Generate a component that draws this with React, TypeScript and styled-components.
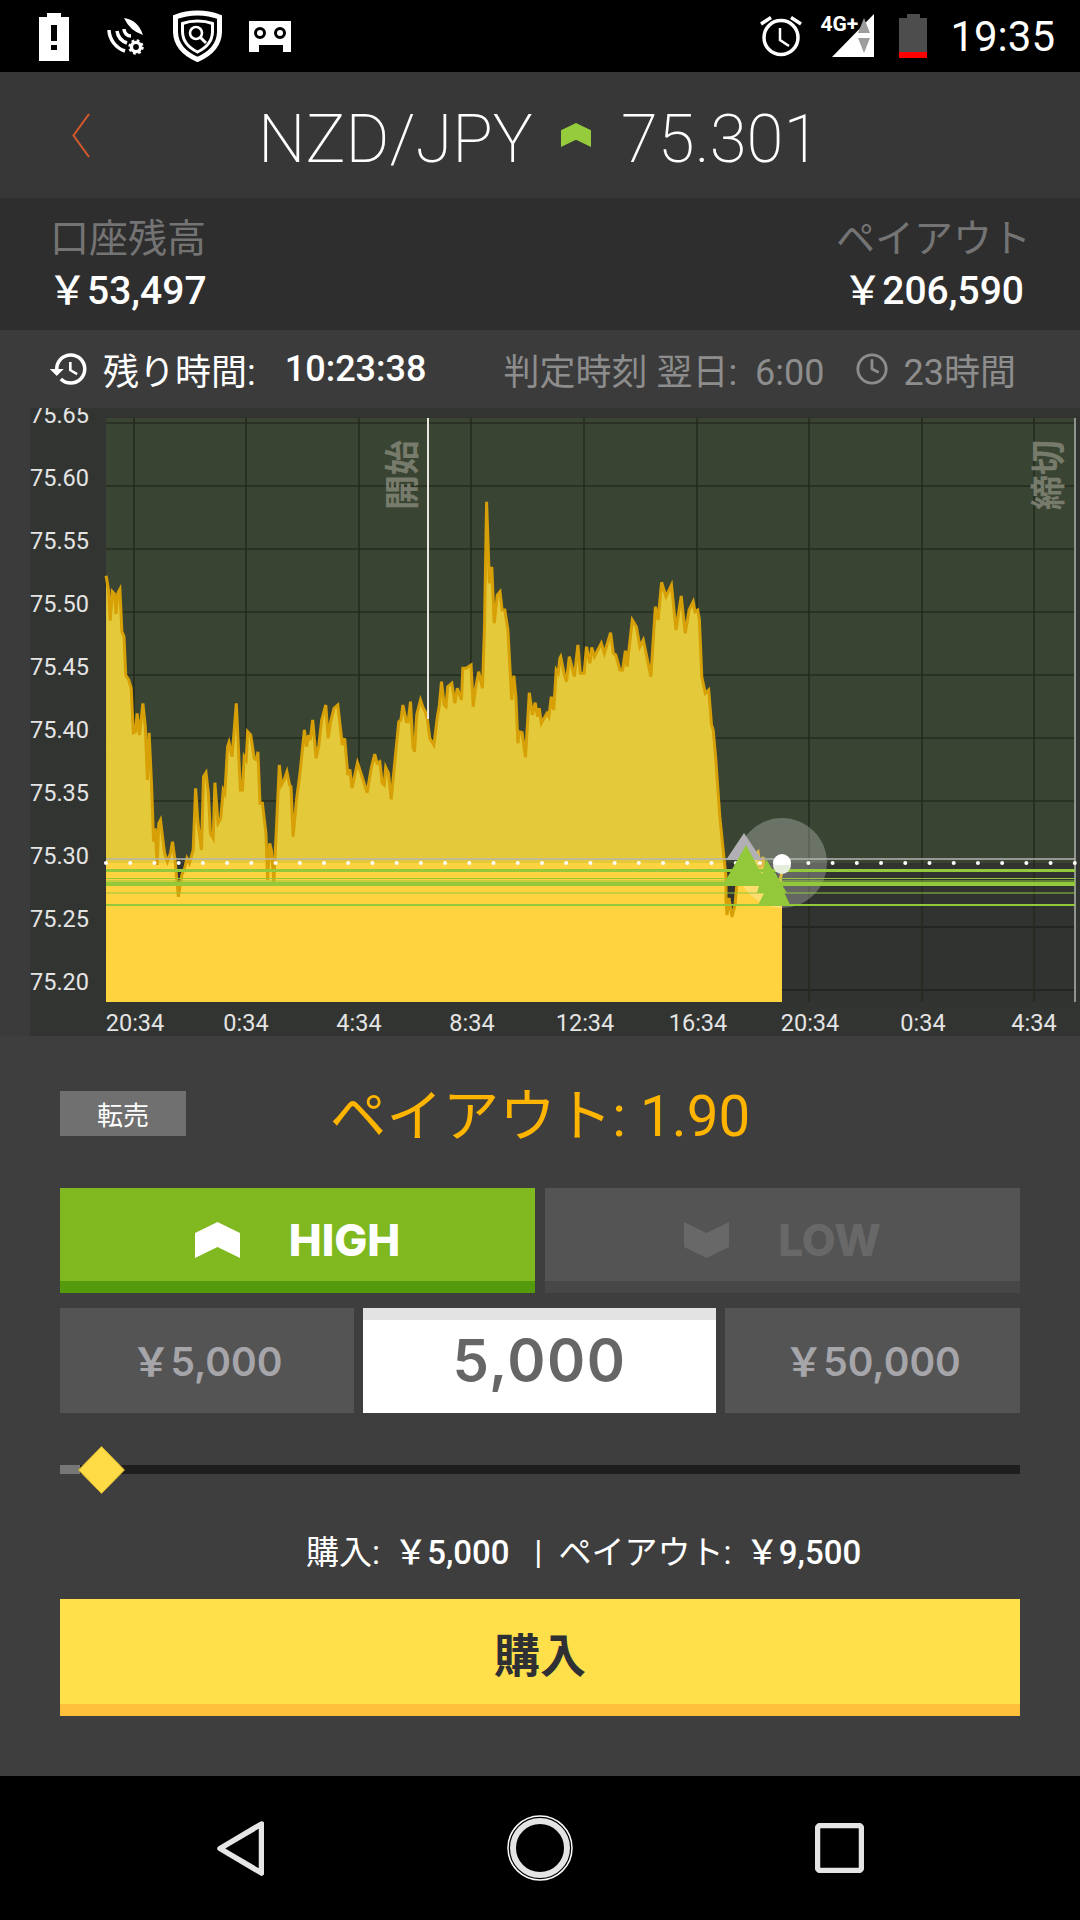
import styled, { createGlobalStyle } from "styled-components";
import { MdHistory } from "react-icons/md";
import { Clock } from "lucide-react";

const JP = `"Roboto", "Noto Sans CJK JP", sans-serif`;
const ROUND = `"Inter", "Noto Sans CJK JP", sans-serif`;

const GlobalStyle = createGlobalStyle`
  html, body {
    margin: 0;
    padding: 0;
    background: #000;
  }
  * {
    box-sizing: border-box;
  }
`;

const Screen = styled.div`
  width: 1080px;
  height: 1920px;
  display: flex;
  flex-direction: column;
  overflow: hidden;
  font-family: ${JP};
  background: #3e3e3e;
`;

/* status bar */
const StatusBar = styled.div`
  height: 72px;
  flex: none;
  background: #000;
  display: flex;
  align-items: flex-start;
  padding: 0 25px 0 39px;
`;
const StatusIcon = styled.svg<{ $left?: number; $top: number }>`
  display: block;
  flex: none;
  margin-left: ${({ $left }) => $left || 0}px;
  margin-top: ${({ $top }) => $top}px;
`;
const StatusSpacer = styled.div`
  flex: 1;
`;
const SignalWrap = styled.div`
  position: relative;
  width: 54px;
  height: 44px;
  margin: 14px 0 0 18px;
  flex: none;
`;
const NetworkType = styled.span`
  position: absolute;
  left: 0;
  top: -2px;
  font-size: 21px;
  line-height: 24px;
  font-weight: 700;
  color: #fff;
`;
const StatusTime = styled.div`
  margin: 17px 0 0 23px;
  font-size: 42px;
  line-height: 40px;
  color: #fff;
`;

/* header */
const Header = styled.header`
  height: 126px;
  flex: none;
  background: #373737;
  display: flex;
  align-items: center;
  padding-left: 72px;
`;
const PairName = styled.div`
  margin-left: 168px;
  padding-top: 8px;
  font-size: 67px;
  line-height: 76px;
  font-weight: 200;
  color: #fff;
`;
const Rate = styled.div`
  margin-left: 30px;
  padding-top: 8px;
  font-size: 67px;
  line-height: 76px;
  font-weight: 200;
  color: #fff;
`;
const HeaderArrow = styled.div`
  margin-left: 28px;
`;

/* balance */
const BalanceRow = styled.section`
  height: 132px;
  flex: none;
  background: #2e2e2e;
  display: flex;
  justify-content: space-between;
  padding: 16px 49px 0 50px;
`;
const BalanceCol = styled.div<{ $right?: boolean }>`
  display: flex;
  flex-direction: column;
  align-items: ${({ $right }) => ($right ? "flex-end" : "flex-start")};
`;
const BalanceLabel = styled.div`
  font-size: 39px;
  line-height: 51px;
  font-weight: 400;
  color: #747474;
`;
const BalanceValue = styled.div<{ $right?: boolean }>`
  font-size: 39px;
  line-height: 52px;
  font-weight: 500;
  color: #fff;
  margin-left: ${({ $right }) => ($right ? 0 : -2)}px;
  margin-right: ${({ $right }) => ($right ? 7 : 0)}px;
`;

/* time row */
const TimeRow = styled.section`
  height: 78px;
  flex: none;
  background: #3b3b3b;
  display: flex;
  align-items: center;
  padding-left: 48px;
  white-space: pre;
`;
const TimeLabel = styled.span`
  margin-left: 13px;
  font-size: 36px;
  color: #fff;
`;
const TimeValue = styled.span`
  margin-left: 29px;
  font-size: 36px;
  font-weight: 500;
  color: #fff;
`;
const Judge = styled.span<{ $left: number }>`
  margin-left: ${({ $left }) => $left}px;
  font-size: 36px;
  font-weight: 400;
  color: #8d8d8d;
`;
const JudgeClock = styled(Clock)`
  flex: none;
  margin: 0 14px 0 31px;
  color: #8d8d8d;
`;

/* chart */
const ChartArea = styled.section`
  height: 628px;
  flex: none;
  background: #3b3b3b;
  padding-left: 30px;
`;
const ChartSvg = styled.svg`
  display: block;
`;
const AxisText = styled.text`
  font-family: "Roboto", sans-serif;
  font-size: 23.5px;
  fill: #e4e4e4;
`;
const MarkerText = styled.text`
  font-family: "Noto Sans CJK JP", sans-serif;
  font-size: 35px;
  font-weight: 700;
  fill: #777b6b;
`;

/* trading panel */
const Panel = styled.section`
  flex: 1;
  background: #3e3e3e;
  padding: 55px 60px 0;
  display: flex;
  flex-direction: column;
`;
const PayoutRow = styled.div`
  height: 45px;
  display: grid;
  grid-template-columns: 126px 1fr 126px;
  grid-template-rows: 45px;
`;
const ResellButton = styled.div`
  height: 45px;
  background: #707070;
  color: #fff;
  font-size: 26px;
  display: flex;
  align-items: center;
  justify-content: center;
`;
const PayoutRate = styled.div`
  text-align: center;
  font-size: 56.5px;
  line-height: 52px;
  color: #ffb400;
`;
const Directions = styled.div`
  margin-top: 52px;
  display: grid;
  grid-template-columns: 1fr 1fr;
  gap: 10px;
`;
const DirectionButton = styled.div<{ $active?: boolean }>`
  height: 105px;
  padding-top: 10px;
  background: ${({ $active }) => ($active ? "#80b820" : "#545454")};
  border-bottom: 12px solid ${({ $active }) => ($active ? "#549a0c" : "#474747")};
  color: ${({ $active }) => ($active ? "#fff" : "#686868")};
  display: flex;
  align-items: center;
  justify-content: center;
  gap: 49px;
  font-family: ${ROUND};
  font-size: 44px;
  font-weight: 800;
`;
const Amounts = styled.div`
  margin-top: 15px;
  display: grid;
  grid-template-columns: 294px 353px 295px;
  gap: 9px;
`;
const AmountCell = styled.div`
  height: 105px;
  padding-bottom: 4px;
  background: #545454;
  color: #a5a5aa;
  font-family: ${ROUND};
  font-size: 39px;
  font-weight: 600;
  display: flex;
  align-items: center;
  justify-content: center;
`;
const AmountInput = styled.div`
  height: 105px;
  padding-bottom: 13px;
  background: #fff;
  border-top: 12px solid #e3e3e3;
  color: #666;
  font-family: ${ROUND};
  font-size: 58px;
  font-weight: 600;
  letter-spacing: 1.5px;
  display: flex;
  align-items: center;
  justify-content: center;
`;
const SliderBox = styled.div`
  position: relative;
  height: 48px;
  margin-top: 33px;
  display: flex;
  align-items: center;
`;
const SliderTrack = styled.div`
  width: 100%;
  height: 9px;
  margin-top: -1px;
  background: #1e1e1e;
`;
const SliderFill = styled.div`
  width: 20px;
  height: 100%;
  background: #777;
`;
const SliderThumb = styled.svg`
  position: absolute;
  left: 18px;
  top: 0;
`;
const Summary = styled.div`
  margin-top: 35px;
  padding-left: 246px;
  font-size: 33px;
  line-height: 48px;
  color: #fff;
  white-space: pre;
`;
const SummaryValue = styled.span`
  margin-left: 6px;
  font-weight: 500;
`;
const BuyButton = styled.div`
  margin-top: 22px;
  height: 117px;
  background: #ffe04b;
  border-bottom: 12px solid #ffc13b;
  color: #2e3033;
  font-size: 46px;
  font-weight: 700;
  display: flex;
  align-items: center;
  justify-content: center;
`;

/* nav bar */
const NavBar = styled.nav`
  height: 144px;
  flex: none;
  background: #000;
  display: grid;
  grid-template-columns: 217px 47px 243px 65px 243px 49px;
  align-items: center;
`;
const NavIcon = styled.svg<{ $col: number }>`
  display: block;
  grid-column: ${({ $col }) => $col};
`;

// trace of the price line, read off the reference in zoom-crop coordinates
const TRACE_A = [
  250,497,257,540,262,632,268,545,274,552,279,612,284,550,290,538,296,665,302,680,307,795,316,810,323,835,329,968,335,965,340,910,347,975,357,880,364,950,370,1110,375,968,382,1120,388,1295,393,1255,398,1365,403,1240,408,1230,415,1290,420,1330,428,1355,437,1330,443,1295,450,1350,460,1460,470,1395,478,1375,485,1345,492,1360,503,1320,510,1135,517,1240,527,1320,533,1100,540,1088,547,1150,553,1270,561,1285,566,1118,575,1240,583,1225,590,1140,595,1150,603,1010,607,997,616,1040,628,880,640,1140,646,1140,651,1040,657,1050,661,965,670,975,680,1045,687,1050,691,1025,697,1180,704,1180,714,1270,719,1410,725,1300,730,1320,737,1415,745,1250,753,1065,759,1125,767,1110,775,1085,783,1125,787,1130,793,1280,803,1170,813,1090,826,960,832,1010,838,975,843,990,850,930,860,1045,868,1005,876,930,888,885,895,985,902,935,912,895,923,885,936,1005,943,985,952,1095,958,1078,964,1135,980,1058,995,1105,1008,1148,1020,1075,1030,1032,1037,1060,1045,1055,1052,1120,1058,1125,1062,1072,1070,1090,1078,1168,1090,1040,1100,935,1106,930,1112,885,1122,935,1127,935,1134,875,1141,1010,1146,1025,1152,915,1163,870,1170,892,1177,905,1183,930,1190,985,1202,1005,1212,920,1218,885,1224,815,1232,885,1237,890,1242,830,1254,820,1263,880,1270,835,1282,870,1286,775,1296,775,1310,765,1316,890,1322,840,1332,785,1343,835,1349,650,1355,275,1363,520,1370,470,1377,640,1386,555,1394,545,1400,600,1408,600,1417,660,1428,870,1434,797,1440,860,1446,1000,1450,965,1458,968,1468,1042,1479,848,1488,915,1496,878,1503,920,1508,895,1514,940,1530,910,1536,920,1543,860,1550,900,1557,780,1563,790,1568,745,
];
const TRACE_B = [
  60,740,70,790,77,815,85,740,100,800,110,705,117,790,128,790,135,710,145,760,150,712,158,740,178,700,187,730,205,668,213,730,220,735,232,780,240,780,248,722,253,770,268,630,280,650,290,710,300,690,322,800,335,590,343,630,353,517,366,560,382,525,395,660,410,558,422,670,433,600,445,575,450,605,458,600,463,630,470,800,480,850,490,840,498,945,503,960,510,1040,522,1220,530,1300,540,1400,
];
const TAIL: number[][] = [
  [726, 900], [727, 915], [729, 898], [732, 917], [735, 905], [737, 883], [740, 867], [750, 860],
  [758, 852], [760, 868], [763, 857], [765, 877], [780, 880], [782, 872],
];

const toPairs = (flat: number[], originX: number) => {
  const out: number[][] = [];
  for (let i = 0; i < flat.length; i += 2) {
    out.push([originX + flat[i] / 2.904, 410 + flat[i + 1] / 3]);
  }
  return out;
};
const PRICE = [...toPairs(TRACE_A, 20), ...toPairs(TRACE_B, 540), ...TAIL];
const linePoints = PRICE.map(([x, y]) => `${x.toFixed(1)},${y.toFixed(1)}`).join(" ");
const areaPoints = `${linePoints} 782,1002 106,1002`;

const Y_LABELS = ["75.65", "75.60", "75.55", "75.50", "75.45", "75.40", "75.35", "75.30", "75.25", "75.20"];
const X_LABELS: [string, number][] = [
  ["20:34", 135], ["0:34", 246], ["4:34", 359], ["8:34", 472], ["12:34", 585],
  ["16:34", 698], ["20:34", 810], ["0:34", 923], ["4:34", 1034],
];
const V_LINES = [134, 246, 359, 471, 584, 697, 809, 922, 1034];
const H_LINES = [423, 486, 549, 612, 675, 738, 801, 927, 990];
const GREEN_LINES: [number, number][] = [[870.5, 3], [878.5, 1], [881, 1], [884, 4], [893, 1], [905, 2]];
const DOTS = Array.from({ length: 41 }, (_, i) => 106 + i * 24.22);

const Chart = () => (
  <ChartArea>
    <ChartSvg width={1050} height={628} viewBox="30 408 1050 628">
      <defs>
        <linearGradient id="priceFill" gradientUnits="userSpaceOnUse" x1="0" y1="418" x2="0" y2="1002">
          <stop offset="0.762" stopColor="#e4ca3a" />
          <stop offset="0.762" stopColor="#ffd23f" />
        </linearGradient>
      </defs>
      <rect x="30" y="408" width="1050" height="628" fill="#323432" />
      <rect x="106" y="418" width="969" height="445" fill="#3a4433" />
      <rect x="106" y="863" width="969" height="139" fill="#303330" />
      {H_LINES.map((y) => (
        <line key={y} x1="106" x2="1075" y1={y} y2={y} stroke={y > 863 ? "#1f211f" : "#252d1f"} strokeWidth="1.5" />
      ))}
      {V_LINES.map((x) => (
        <line key={x} x1={x} x2={x} y1="418" y2="1002" stroke="#232a1e" strokeWidth="1.5" />
      ))}
      <polygon points={areaPoints} fill="url(#priceFill)" />
      <polyline points={linePoints} fill="none" stroke="#d6a006" strokeWidth="3" />
      <line x1="428" x2="428" y1="418" y2="719" stroke="#e8e8e0" strokeWidth="2" />
      <line x1="1075" x2="1075" y1="418" y2="1002" stroke="#8f948c" strokeWidth="2" />
      <MarkerText transform="translate(415 510) rotate(-90)">開始</MarkerText>
      <MarkerText transform="translate(1061 510) rotate(-90)">締切</MarkerText>

      <circle cx="782" cy="863" r="45" fill="#fff" fillOpacity="0.25" />
      <line x1="106" x2="1075" y1="859" y2="859" stroke="#b5b5b5" strokeWidth="1.5" />
      {DOTS.map((x) => (
        <circle key={x} cx={x} cy="863" r="2" fill="#fff" />
      ))}
      {GREEN_LINES.map(([y, h]) => (
        <rect key={y} x="106" y={y - h / 2} width="969" height={h} fill="#93c83a" />
      ))}
      <polygon points="744,833 726,860 762,860" fill="#b2b0b4" />
      <polygon points="746,845 723,885 768,885" fill="#93c83a" />
      <circle cx="782" cy="863" r="9" fill="#fff" />
      <path d="M773 865h18a9 9 0 0 1 -18 0Z" fill="#e4ecdb" />
      <polygon points="766,859 787,893 757,893" fill="#93c83a" />
      <polygon points="775,872 758,905 790,905" fill="#93c83a" />

      {Y_LABELS.map((label, i) => (
        <AxisText key={label} x="30" y={423 + i * 63}>
          {label}
        </AxisText>
      ))}
      {X_LABELS.map(([label, x]) => (
        <AxisText key={x} x={x} y="1031" textAnchor="middle">
          {label}
        </AxisText>
      ))}
    </ChartSvg>
  </ChartArea>
);

const Chevron = ({ w, h, color, down }: { w: number; h: number; color: string; down?: boolean }) => (
  <svg width={w} height={h} viewBox="0 0 45 36" style={{ display: "block", flex: "none" }}>
    <polygon
      points={down ? "0,0 22.5,11 45,0 45,25 22.5,36 0,25" : "22.5,0 45,11 45,36 22.5,25 0,36 0,11"}
      fill={color}
    />
  </svg>
);

export default function App() {
  return (
    <Screen>
      <GlobalStyle />
      <StatusBar>
        <StatusIcon $top={13} width={30} height={48} viewBox="39 13 30 48">
          <path d="M47 13h14v4h8v44H39V17h8z" fill="#fff" />
          <rect x="51" y="25" width="6" height="16" fill="#000" />
          <rect x="51" y="45" width="6" height="5" fill="#000" />
        </StatusIcon>
        <StatusIcon $left={38} $top={17} width={37} height={38} viewBox="107 17 37 38">
          <path d="M109 30a23 23 0 0 0 16 21" fill="none" stroke="#fff" strokeWidth="3.5" />
          <path d="M117 31a15 15 0 0 0 10 12" fill="none" stroke="#fff" strokeWidth="3.5" />
          <path d="M124 29a7 7 0 0 0 7 7" fill="none" stroke="#fff" strokeWidth="3.5" />
          <path d="M124 18Q138 20 143 35Q130 31 124 18Z" fill="#fff" />
          <circle cx="136" cy="47" r="4.6" fill="none" stroke="#fff" strokeWidth="3.4" />
          <circle cx="136" cy="47" r="6.5" fill="none" stroke="#fff" strokeWidth="2.4" strokeDasharray="2.6 2.5" />
        </StatusIcon>
        <StatusIcon $left={29} $top={10} width={49} height={52} viewBox="173 10 49 52">
          <path d="M197.5 13Q186 13 175.500 17V32Q176 50 197.500 59.500Q219 50 219.500 32V17Q209 13 197.500 13Z" fill="none" stroke="#fff" strokeWidth="5" />
          <path d="M197.500 21Q189 21 182.500 23.500V32Q183 45 197.500 52Q212 45 212.500 32V23.500Q206 21 197.500 21Z" fill="none" stroke="#fff" strokeWidth="3" />
          <circle cx="196" cy="33" r="6" fill="none" stroke="#fff" strokeWidth="2.6" />
          <path d="M200.500 37.500L206 43" stroke="#fff" strokeWidth="3" />
        </StatusIcon>
        <StatusIcon $left={27} $top={21} width={42} height={31} viewBox="249 21 42 31">
          <path d="M249 21h42v31h-8v-7h-24v7h-10z" fill="#fff" />
          <circle cx="260" cy="33" r="4.500" fill="#fff" stroke="#000" strokeWidth="3" />
          <circle cx="280" cy="33" r="4.500" fill="#fff" stroke="#000" strokeWidth="3" />
        </StatusIcon>
        <StatusSpacer />
        <StatusIcon $top={15} width={42} height={42} viewBox="760 15 42 42">
          <circle cx="781" cy="37.500" r="17" fill="none" stroke="#fff" strokeWidth="3.500" />
          <path d="M780 28V40L789 46" fill="none" stroke="#fff" strokeWidth="2.500" />
          <path d="M761 24L771 17.500M791 17.500L801 24" stroke="#fff" strokeWidth="3.500" />
        </StatusIcon>
        <SignalWrap>
          <svg width="54" height="44" viewBox="820 14 54 44" style={{ display: "block" }}>
            <polygon points="874,14 874,57 832,57" fill="#fff" />
            <polygon points="864,18 870,33 858,33" fill="#9d9d9d" />
            <polygon points="858,38 870,38 864,53" fill="#9d9d9d" />
          </svg>
          <NetworkType>4G+</NetworkType>
        </SignalWrap>
        <StatusIcon $left={25} $top={14} width={28} height={44} viewBox="899 14 28 44">
          <path d="M907 14h13v4h7v34h-28V18h8z" fill="#4d4d4d" />
          <rect x="899" y="52" width="28" height="6" fill="#f00" />
        </StatusIcon>
        <StatusTime>19:35</StatusTime>
      </StatusBar>

      <Header>
        <svg width="18" height="45" viewBox="72 113 18 45" style={{ display: "block", flex: "none" }}>
          <path d="M89 114L73.500 135.500L89 157" fill="none" stroke="#d5592a" strokeWidth="2" />
        </svg>
        <PairName>NZD/JPY</PairName>
        <HeaderArrow>
          <Chevron w={30} h={24} color="#96cb3b" />
        </HeaderArrow>
        <Rate>75.301</Rate>
      </Header>

      <BalanceRow>
        <BalanceCol>
          <BalanceLabel>口座残高</BalanceLabel>
          <BalanceValue>￥53,497</BalanceValue>
        </BalanceCol>
        <BalanceCol $right>
          <BalanceLabel>ペイアウト</BalanceLabel>
          <BalanceValue $right>￥206,590</BalanceValue>
        </BalanceCol>
      </BalanceRow>

      <TimeRow>
        <MdHistory size={42} color="#fff" />
        <TimeLabel>残り時間:</TimeLabel>
        <TimeValue>10:23:38</TimeValue>
        <Judge $left={77}>判定時刻 翌日:  6:00</Judge>
        <JudgeClock size={34} strokeWidth={2} />
        <Judge $left={0}>23時間</Judge>
      </TimeRow>

      <Chart />

      <Panel>
        <PayoutRow>
          <ResellButton>転売</ResellButton>
          <PayoutRate>ペイアウト: 1.90</PayoutRate>
        </PayoutRow>
        <Directions>
          <DirectionButton $active>
            <Chevron w={45} h={36} color="#fff" />
            HIGH
          </DirectionButton>
          <DirectionButton>
            <Chevron w={45} h={36} color="#686868" down />
            LOW
          </DirectionButton>
        </Directions>
        <Amounts>
          <AmountCell>￥5,000</AmountCell>
          <AmountInput>5,000</AmountInput>
          <AmountCell>￥50,000</AmountCell>
        </Amounts>
        <SliderBox>
          <SliderTrack>
            <SliderFill />
          </SliderTrack>
          <SliderThumb width="47" height="48" viewBox="0 0 47 48">
            <polygon points="23.500,0.500 46.500,24 23.500,47.500 0.500,24" fill="#ffdc45" stroke="#c9a92e" strokeWidth="1" />
          </SliderThumb>
        </SliderBox>
        <Summary>
          購入: <SummaryValue>￥5,000</SummaryValue>   |  ペイアウト: <SummaryValue>￥9,500</SummaryValue>
        </Summary>
        <BuyButton>購入</BuyButton>
      </Panel>

      <NavBar>
        <NavIcon $col={2} width={47} height={55} viewBox="217 1820 47 55">
          <path d="M261.500 1823L220 1847.500L261.500 1872Z" fill="none" stroke="#e6e6e6" strokeWidth="5.500" strokeLinejoin="round" />
        </NavIcon>
        <NavIcon $col={4} width={66} height={66} viewBox="507 1815 66 66">
          <circle cx="540" cy="1848" r="32" fill="none" stroke="#fff" strokeWidth="1.500" />
          <circle cx="540" cy="1848" r="27" fill="none" stroke="#e4e4e4" strokeWidth="6" />
        </NavIcon>
        <NavIcon $col={6} width={49} height={50} viewBox="815 1823 49 50">
          <rect x="817.500" y="1825.500" width="44" height="45" rx="3" fill="none" stroke="#e4e4e4" strokeWidth="5.500" />
        </NavIcon>
      </NavBar>
    </Screen>
  );
}
